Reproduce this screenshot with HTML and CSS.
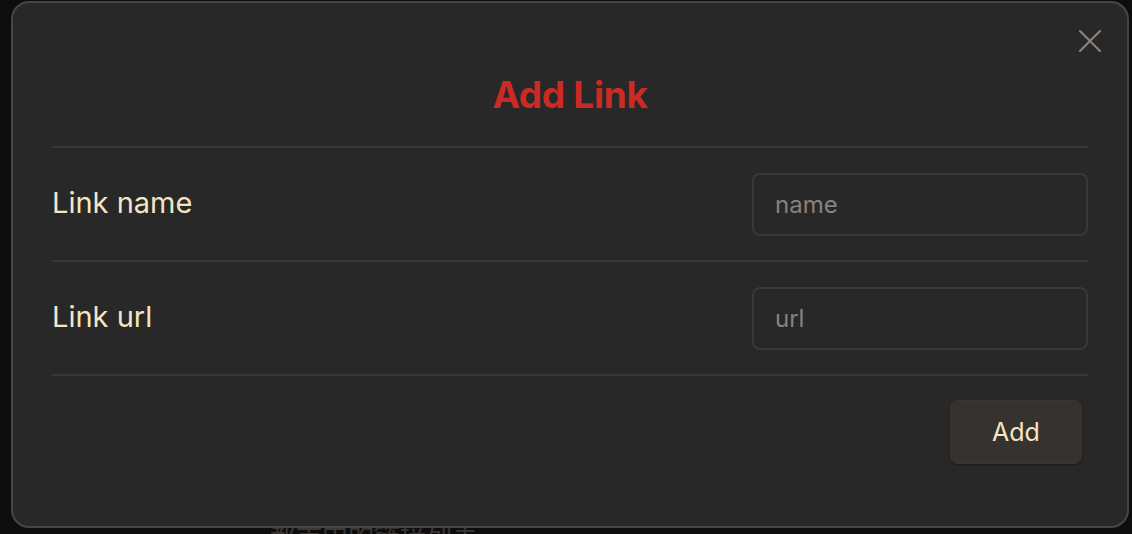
FILE: index.html
```html
<!DOCTYPE html>
<html lang="en">
<head>
<meta charset="utf-8">
<title>Add Link</title>
<link rel="stylesheet" href="styles.css">
</head>
<body>
<div class="page">
  <p class="behind">都市中的链接列表</p>
</div>
<div class="modal">
  <button class="close" aria-label="Close">
    <svg width="22" height="22" viewBox="0 0 22 22"><path d="M1 1 L21 21 M21 1 L1 21" stroke="#8a817b" stroke-width="2.2" stroke-linecap="round" fill="none"/></svg>
  </button>
  <h1 class="title">Add Link</h1>
  <div class="row">
    <label class="label">Link name</label>
    <input class="field" type="text" placeholder="name">
  </div>
  <div class="row">
    <label class="label">Link url</label>
    <input class="field" type="text" placeholder="url">
  </div>
  <div class="actions">
    <button class="add">Add</button>
  </div>
</div>
</body>
</html>
```
FILE: styles.css
```css
html, body {
  margin: 0;
  padding: 0;
  width: 1132px;
  height: 534px;
  overflow: hidden;
  background: #0d0d0d;
  font-family: Inter, "Noto Sans", "Noto Sans CJK SC", sans-serif;
}
.page {
  padding-top: 524px;
  padding-left: 270px;
}
.behind {
  margin: 0;
  font-size: 26px;
  color: #3b3734;
  line-height: 1;
}
.modal {
  position: absolute;
  left: 11px;
  top: 1px;
  width: 1118px;
  height: 527px;
  box-sizing: border-box;
  border: 2px solid #4a4541;
  border-radius: 18px;
  background: #282828;
  padding: 0 39px;
  display: flex;
  flex-direction: column;
}
.close {
  position: absolute;
  right: 26px;
  top: 27px;
  width: 22px;
  height: 22px;
  padding: 0;
  border: 0;
  background: none;
  display: flex;
}
.title {
  margin: 0;
  height: 145px;
  box-sizing: border-box;
  padding-top: 70px;
  text-align: center;
  font-size: 37px;
  font-weight: 700;
  line-height: 44px;
  color: #cc2a24;
  letter-spacing: -0.3px;
  border-bottom: 2px solid #393837;
}
.row {
  height: 112px;
  border-bottom: 2px solid #393837;
  display: flex;
  align-items: center;
  justify-content: space-between;
}
.label {
  font-size: 29px;
  color: #f4e6c2;
  margin-top: -3px;
}
.field {
  width: 336px;
  height: 63px;
  box-sizing: border-box;
  margin-top: 1px;
  border: 2px solid #3b3836;
  border-radius: 8px;
  background: #282828;
  padding: 0 21px;
  font-family: inherit;
  font-size: 24px;
  color: #f4e6c2;
  outline: none;
}
.field::placeholder {
  color: #8a817c;
}
.actions {
  display: flex;
  justify-content: flex-end;
  padding-top: 24px;
  padding-right: 6px;
}
.add {
  width: 132px;
  height: 64px;
  box-sizing: border-box;
  border: 1px solid #3a3633;
  border-radius: 8px;
  background: #353230;
  font-family: inherit;
  font-size: 25px;
  color: #f4e6c2;
  box-shadow: 0 1px 2px rgba(0,0,0,0.35);
}
```
